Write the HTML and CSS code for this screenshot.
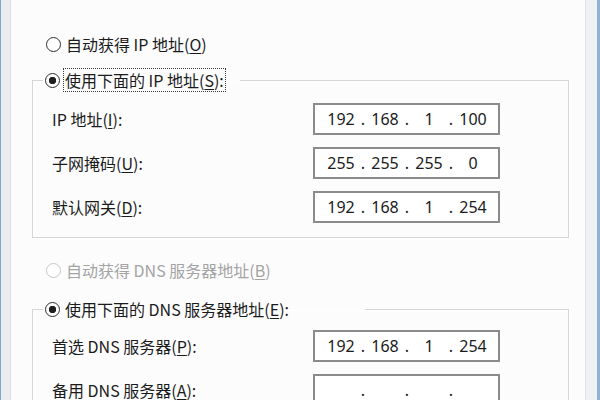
FILE: index.html
```html
<!DOCTYPE html>
<html lang="zh-CN">
<head>
<meta charset="utf-8">
<title>IPv4 属性</title>
<link rel="stylesheet" href="styles.css">
</head>
<body>
<div class="window">
  <div class="edge-left"></div>
  <main class="content">
    <div class="radio-row">
      <span class="radio"></span><span class="label">自动获得 IP 地址(<u>O</u>)</span>
    </div>
    <fieldset class="group">
      <legend class="legend legend-ip"><span class="legend-inner"><span class="radio checked"></span><span class="label focus">使用下面的 IP 地址(<u>S</u>):</span></span></legend>
      <div class="rows">
        <span class="field-label">IP 地址(<u>I</u>):</span>
        <div class="ip"><span class="oct">192</span><span class="dot">.</span><span class="oct">168</span><span class="dot">.</span><span class="oct">1</span><span class="dot">.</span><span class="oct">100</span></div>
        <span class="field-label">子网掩码(<u>U</u>):</span>
        <div class="ip"><span class="oct">255</span><span class="dot">.</span><span class="oct">255</span><span class="dot">.</span><span class="oct">255</span><span class="dot">.</span><span class="oct">0</span></div>
        <span class="field-label">默认网关(<u>D</u>):</span>
        <div class="ip"><span class="oct">192</span><span class="dot">.</span><span class="oct">168</span><span class="dot">.</span><span class="oct">1</span><span class="dot">.</span><span class="oct">254</span></div>
      </div>
    </fieldset>
    <div class="radio-row disabled">
      <span class="radio"></span><span class="label">自动获得 DNS 服务器地址(<u>B</u>)</span>
    </div>
    <fieldset class="group group-dns">
      <legend class="legend legend-dns"><span class="legend-inner"><span class="radio checked"></span><span class="label">使用下面的 DNS 服务器地址(<u>E</u>):</span></span></legend>
      <div class="rows">
        <span class="field-label">首选 DNS 服务器(<u>P</u>):</span>
        <div class="ip"><span class="oct">192</span><span class="dot">.</span><span class="oct">168</span><span class="dot">.</span><span class="oct">1</span><span class="dot">.</span><span class="oct">254</span></div>
        <span class="field-label">备用 DNS 服务器(<u>A</u>):</span>
        <div class="ip"><span class="oct"></span><span class="dot">.</span><span class="oct"></span><span class="dot">.</span><span class="oct"></span><span class="dot">.</span><span class="oct"></span></div>
      </div>
    </fieldset>
  </main>
  <div class="edge-right"></div>
</div>
</body>
</html>
```
FILE: styles.css
```css
html, body {
  margin: 0;
  padding: 0;
}

body {
  width: 600px;
  height: 400px;
  overflow: hidden;
  font-family: "Noto Sans CJK SC", "Noto Sans", sans-serif;
  font-size: 16px;
  color: #1b1b1b;
}

.window {
  display: flex;
  height: 400px;
  background: #fcfcfd;
}

.edge-left {
  width: 10px;
  border-left: 1px solid #7ea6cf;
  background: #eaecef;
  box-shadow: inset -1px 0 0 #dcdde2;
}

.edge-right {
  width: 11px;
  border-left: 1px solid #e2e3e6;
  border-right: 3px solid #8fb3d6;
  background: #f0f1f3;
}

.content {
  flex: 1;
  padding-top: 32px;
  min-width: 0;
}

.radio-row {
  display: flex;
  align-items: center;
  gap: 5px;
  height: 24px;
  padding-left: 35px;
}

.radio-row.disabled {
  margin-top: 20px;
}

.radio {
  flex: none;
  width: 15px;
  height: 15px;
  box-sizing: border-box;
  border: 1.5px solid #2e2e2e;
  border-radius: 50%;
  background: #fff;
}

.radio.checked {
  background: radial-gradient(circle, #1e1e1e 0 3.4px, #fff 4px);
}

.label {
  line-height: 22px;
  white-space: nowrap;
}

.focus {
  border: 1px dotted #3a3a3a;
  padding: 0 1px;
  margin-left: -2px;
}

.disabled .radio {
  border-color: #c6c6c6;
}

.disabled .label {
  color: #a4a4a4;
}

.group {
  margin: 12px 16px 0 21px;
  padding: 11px 0 14px 19px;
  border: 1px solid #d6d6d8;
  box-shadow: inset 1px 1px 0 #fff, 1px 1px 0 #fff;
  min-width: 0;
}

.group-dns {
  margin-top: 15px;
  padding-top: 9px;
}

.legend {
  margin-left: -9px;
  padding: 0 0 0 2px;
  box-sizing: border-box;
  height: 24px;
}

.legend-ip {
  width: 197px;
}

.legend-dns {
  width: 322px;
}

.legend-inner {
  display: flex;
  align-items: center;
  gap: 5px;
  height: 24px;
}

.rows {
  display: grid;
  grid-template-columns: 261px 187px;
  row-gap: 12px;
  align-items: center;
}

.field-label {
  white-space: nowrap;
}

.ip {
  display: flex;
  align-items: center;
  height: 32px;
  box-sizing: border-box;
  border: 2px solid #8b8b8b;
  background: #fff;
  padding-left: 7px;
  font-family: "Noto Sans", "Open Sans", sans-serif;
  font-size: 16px;
  color: #1b1b1b;
}

.oct {
  width: 38px;
  text-align: center;
}

.dot {
  width: 6px;
  text-align: center;
}

.label u,
.field-label u {
  text-underline-offset: 2px;
}
```
